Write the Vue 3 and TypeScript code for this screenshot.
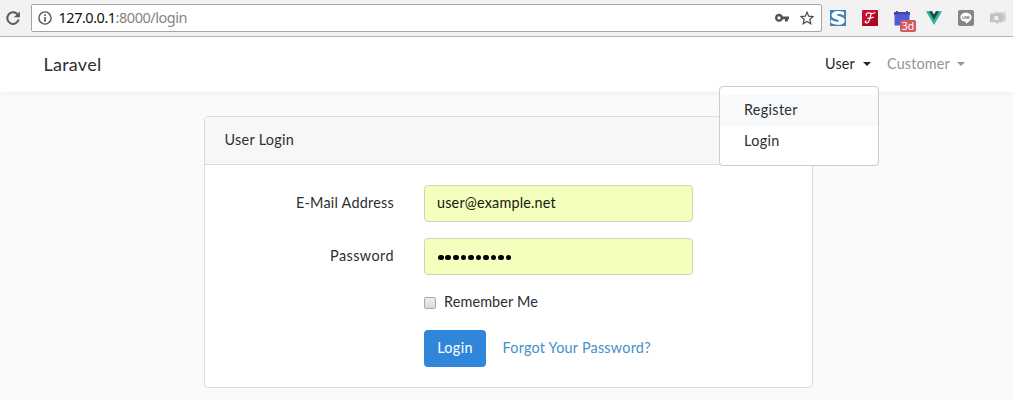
<script setup lang="ts">
import { ref } from 'vue'

interface NavItem {
  label: string
  active: boolean
}

const navItems: NavItem[] = [
  { label: 'User', active: true },
  { label: 'Customer', active: false },
]
const menuItems: string[] = ['Register', 'Login']
const email = ref('user@example.net')
const passwordLength = 10
</script>

<template>
  <div class="page">
    <div class="toolbar">
      <svg class="reload" viewBox="0 0 16 16" width="16" height="16">
        <path d="M12.4 4.2A5.8 5.8 0 1 0 13.7 9.6" fill="none" stroke="#5a5a5a" stroke-width="2" />
        <path d="M14.9 1.4V7.3H8.8z" fill="#5a5a5a" />
      </svg>
      <div class="address">
        <svg class="info" viewBox="0 0 14 14" width="14" height="14">
          <circle cx="7" cy="7" r="6.1" fill="none" stroke="#555" stroke-width="1.4" />
          <path d="M7 3.2v1.7M7 6v4.8" stroke="#555" stroke-width="1.6" />
        </svg>
        <span class="url"><b>127.0.0.1</b>:8000/login</span>
        <svg class="key" viewBox="0 0 14 10" width="14" height="10">
          <path fill="#505050" fill-rule="evenodd" d="M4 .8A4 4 0 0 1 7.8 3.6H14V6.3H12.8V8.6H10V6.3H7.8A4 4 0 1 1 4 .8zM4 3.3a1.6 1.6 0 1 0 0 3.2a1.6 1.6 0 0 0 0-3.2z" />
        </svg>
        <svg class="star" viewBox="0 0 14 14" width="14" height="14">
          <path d="M7 1.3L8.7 5.2L13 5.6L9.8 8.4L10.8 12.7L7 10.4L3.2 12.7L4.2 8.4L1 5.6L5.3 5.2z" fill="none" stroke="#505050" stroke-width="1.3" />
        </svg>
      </div>
      <div class="extensions">
        <svg viewBox="0 0 16 16" width="16" height="16">
          <rect width="16" height="16" fill="#4482b4" />
          <path d="M14 2V5.4C10.5 3.7 6.8 3.6 7 4.9C7.3 6.2 15 6.3 14.8 10.4C14.6 15.6 6.5 15.8 .8 13V9.6C4.6 11.8 9 12.2 9 10.9C9 9.2 1.6 9.6 1.6 5.3C1.7 .8 8.6 0 14 2z" fill="#fff" />
        </svg>
        <svg viewBox="0 0 16 16" width="16" height="16">
          <rect width="16" height="16" rx="1" fill="#c5102c" />
          <path d="M0 15.5L15.5 0H15a1 1 0 0 1 1 1V15a1 1 0 0 1-1 1H1z" fill="#ac0822" />
          <path d="M4.4 5.5C3.3 3.2 5.6 2.6 8 3.2C10 3.7 11.8 3.7 13 2.6M9.2 3.6C8.2 7 7.7 13 4.6 13C2.9 13 2.8 11.2 4.2 11.1M5.8 8.3C8 7.2 9.2 8.7 11.2 7.2" fill="none" stroke="#fff" stroke-width="1.2" stroke-linecap="round" />
        </svg>
        <div class="calendar">
          <svg viewBox="0 0 16 16" width="16" height="16">
            <path d="M0 2H2V1H4V2H12V1H14V2H16V5H0z" fill="#4448ac" />
            <rect x=".5" y="4.5" width="15" height="11" fill="#4c5bdc" />
          </svg>
          <span class="count">3d</span>
        </div>
        <svg viewBox="0 0 16 16" width="16" height="16">
          <path d="M0 1.2H6L8 4.8L10 1.2H16L8 15z" fill="#22b990" />
          <path d="M3.1 1.2H6L8 4.8L10 1.2H12.9L8 9.7z" fill="#27404f" />
        </svg>
        <svg viewBox="0 0 16 16" width="16" height="16">
          <rect width="16" height="16" rx="2" fill="#858585" />
          <path d="M8 2.7C11.2 2.7 13.6 4.7 13.6 7.2C13.6 9.8 10.3 12.2 8 13.7C7.7 13.3 8.2 12.2 7.5 11.8C4.5 11.5 2.4 9.7 2.4 7.2C2.4 4.7 4.8 2.7 8 2.7z" fill="#fff" />
          <text x="8" y="8.7" text-anchor="middle" textLength="8" class="line-text">LINE</text>
        </svg>
        <svg viewBox="0 0 16 16" width="16" height="16">
          <path d="M4 2H14.5Q16 2 16 3.5V11H14.7V13L12 11H4z" fill="#d6d6d6" />
          <path d="M1.5 3.5H11Q12.5 3.5 12.5 5V11Q12.5 12.3 11 12.3H9L6.4 14.5V12.3H1.5Q0 12.3 0 11V5Q0 3.5 1.5 3.5z" fill="#c1c1c1" />
          <path d="M13.4 4.3V9.6" stroke="#bcbcbc" />
          <text x="6.2" y="10.4" text-anchor="middle" class="chat-text">a</text>
        </svg>
      </div>
    </div>

    <nav class="navbar">
      <a class="brand">Laravel</a>
      <ul class="nav">
        <li v-for="item in navItems" :key="item.label" :class="['nav-item', { active: item.active }]">
          <span :class="['nav-label', item.label.toLowerCase()]">{{ item.label }}</span><i class="caret"></i>
          <div v-if="item.active" class="menu">
            <a v-for="(entry, i) in menuItems" :key="entry" :class="['menu-entry', { hovered: i === 0 }]">{{ entry }}</a>
          </div>
        </li>
      </ul>
    </nav>

    <main class="card">
      <header class="card-header">User Login</header>
      <form class="card-body" @submit.prevent>
        <div class="row">
          <label class="label email-label">E-Mail Address</label>
          <div class="field email">{{ email }}</div>
        </div>
        <div class="row">
          <label class="label password-label">Password</label>
          <div class="field password"><i v-for="n in passwordLength" :key="n" class="dot"></i></div>
        </div>
        <div class="remember"><span class="checkbox"></span><span class="remember-text">Remember Me</span></div>
        <div class="actions">
          <button class="submit">Login</button>
          <a class="forgot">Forgot Your Password?</a>
        </div>
      </form>
    </main>
  </div>
</template>

<style>
body {
  margin: 0;
}
</style>

<style scoped>
.page {
  width: 1013px;
  height: 400px;
  overflow: hidden;
  background: #f8fafc;
  color: #2b2f33;
  font: 14.4px/22px Lato, "Open Sans", sans-serif;
}
* {
  box-sizing: border-box;
}
svg {
  display: block;
  flex: none;
}
.toolbar {
  display: flex;
  height: 37px;
  padding: 4px 7px 0 5px;
  background: #f2f2f2;
  border-bottom: 1px solid #b3b3b3;
}
.reload {
  margin-top: 6px;
}
.address {
  display: flex;
  width: 791px;
  height: 28px;
  margin-left: 10px;
  padding: 6px 7px 0 6px;
  background: #fff;
  border: 1px solid #a5a5a5;
  border-radius: 2px;
}
.url {
  flex: 1;
  margin: -4px 0 0 6.5px;
  color: #858585;
  font: 14.5px/21px "Noto Sans", sans-serif;
  letter-spacing: -0.48px;
}
.url b {
  color: #111;
  font-weight: 400;
}
.key {
  margin: 2px 11px 0 0;
}
.extensions {
  display: flex;
  gap: 16px;
  margin: 6px 0 0 8px;
}
.calendar {
  position: relative;
}
.count {
  position: absolute;
  top: 10px;
  left: 6px;
  width: 16px;
  height: 12px;
  border-radius: 2px;
  background: #d15863;
  color: #fff;
  font: 10.5px/12px "Noto Sans", sans-serif;
  text-align: center;
}
.line-text {
  fill: #777;
  font: bold 4px "Liberation Sans", sans-serif;
}
.chat-text {
  fill: #fff;
  font: bold 8px "Liberation Sans", sans-serif;
}
.navbar {
  position: relative;
  z-index: 1;
  display: flex;
  justify-content: space-between;
  align-items: center;
  height: 55px;
  padding: 0 48px 0 43.5px;
  background: #fff;
  box-shadow: 0 2px 4px rgba(0, 0, 0, 0.04);
}
.brand {
  padding-bottom: 1px;
  font-size: 18px;
  letter-spacing: 0.25px;
}
.nav {
  display: flex;
  gap: 16px;
  margin: 0;
  padding: 0;
  list-style: none;
}
.nav-item {
  position: relative;
  display: flex;
  align-items: center;
  height: 23px;
  line-height: 22px;
  color: #949494;
}
.nav-item.active {
  color: #252525;
}
.nav-label {
  height: 23px;
}
.nav-label.user {
  width: 38px;
  letter-spacing: 0.15px;
}
.nav-label.customer {
  width: 70px;
  letter-spacing: 0.15px;
}
.caret {
  margin-top: -2px;
  border: 4px solid transparent;
  border-top-color: currentColor;
  border-bottom: 0;
}
.menu {
  position: absolute;
  top: 33px;
  right: -8px;
  width: 160px;
  height: 80px;
  padding: 8px 0;
  background: #fff;
  border: 1px solid #ccc;
  border-radius: 4px;
  color: #2b2f33;
}
.menu-entry {
  display: block;
  height: 31px;
  padding: 4px 24px;
  letter-spacing: 0.32px;
}
.menu-entry.hovered {
  background: #f8f9fa;
}
.card {
  width: 609px;
  height: 272px;
  margin: 24px 0 0 204px;
  background: #fff;
  border: 1px solid #dadcde;
  border-radius: 4px;
}
.card-header {
  height: 48px;
  padding: 12px 19.5px;
  background: #f7f7f7;
  border-bottom: 1px solid #dadada;
  border-radius: 3px 3px 0 0;
  letter-spacing: 0.3px;
}
.card-body {
  padding: 20px 0 0 20px;
}
.row {
  display: flex;
  align-items: center;
  margin-bottom: 16px;
}
.label {
  width: 169px;
  margin-right: 30px;
  padding-bottom: 1px;
  text-align: right;
}
.email-label {
  letter-spacing: 0.24px;
}
.password-label {
  letter-spacing: 0.44px;
}
.field {
  display: flex;
  align-items: center;
  width: 269px;
  height: 37px;
  padding: 0 12px 1px;
  background: #f5ffbd;
  border: 1px solid #cdd6bc;
  border-radius: 4px;
  color: #151a10;
  letter-spacing: 0.18px;
}
.dot {
  width: 5.6px;
  height: 5.6px;
  margin: 3px 1px 0 0.94px;
  border-radius: 50%;
  background: #000;
}
.remember {
  display: flex;
  align-items: center;
  height: 23px;
  margin-left: 199px;
}
.remember-text {
  padding-bottom: 1px;
  letter-spacing: 0.14px;
}
.checkbox {
  width: 12px;
  height: 12px;
  margin-right: 8px;
  background: linear-gradient(#eee, #d9d9d9);
  border: 1px solid #aaa;
  border-radius: 2px;
}
.actions {
  display: flex;
  align-items: center;
  margin: 16px 0 0 199px;
}
.submit {
  width: 62px;
  height: 37px;
  padding: 0 0 1px;
  background: #2f86db;
  border: 0;
  border-radius: 4px;
  color: #fff;
  font: inherit;
  letter-spacing: 0.35px;
}
.forgot {
  margin-left: 16.5px;
  padding-bottom: 1px;
  color: #4591c6;
  letter-spacing: 0.23px;
}
</style>
